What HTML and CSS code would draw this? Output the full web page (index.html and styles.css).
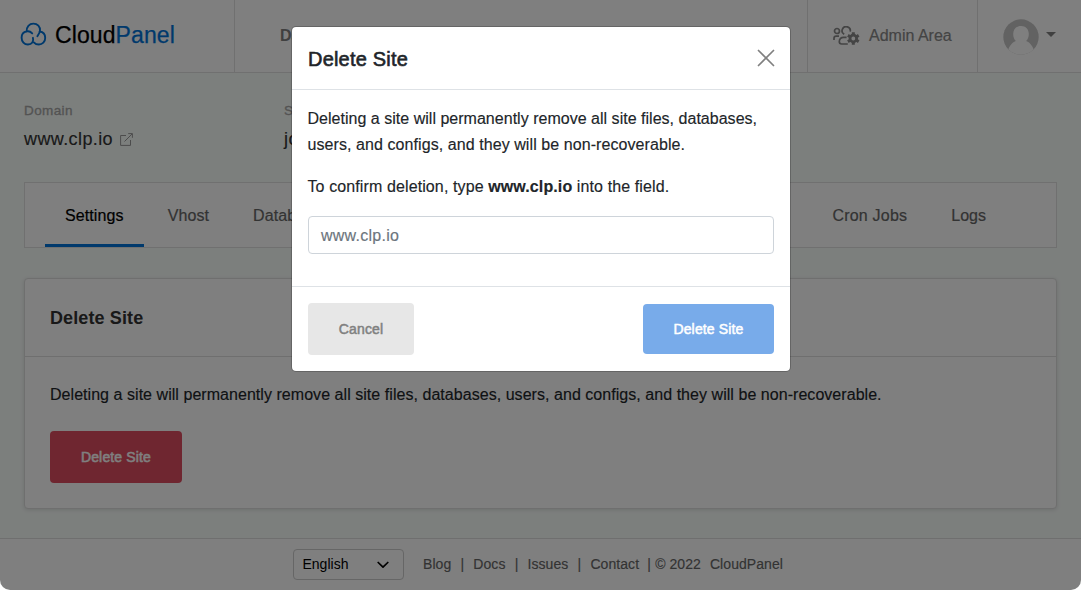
FILE: index.html
```html
<!DOCTYPE html>
<html lang="en">
<head>
<meta charset="utf-8">
<title>Delete Site - CloudPanel</title>
<link rel="stylesheet" href="styles.css">
</head>
<body>
<div class="window">
  <header class="topbar">
    <a class="brand">
      <svg class="brand-icon" viewBox="0 0 27 25" fill="none" stroke="currentColor" stroke-width="1.9" stroke-linecap="round">
        <path d="M6.7 9.4C6.300 4.800 9.300 1.600 13.400 1.600C17.600 1.600 20.300 4.800 20 8.500C19.800 11 18.400 12.600 17.400 14.200"/>
        <path d="M12.200 11.400C10.600 9.600 8.700 8.900 6.700 9.400C3.500 10 1.600 12.500 1.600 15.700C1.600 19.500 4.300 22.500 7.900 22.500C12 22.500 14 19.200 12.900 15.800"/>
        <path d="M19.700 9.500C23 10 25.200 12.600 25.200 15.900C25.200 19.700 22.400 22.500 18.900 22.500C16.800 22.500 15.100 21.700 13.800 20.300"/>
      </svg>
      <span class="brand-name">Cloud<span class="brand-accent">Panel</span></span>
    </a>
    <nav class="main-nav"><span>Dashboard</span></nav>
    <a class="admin-link">
      <svg class="admin-icon" viewBox="0 0 27 20" fill="none" stroke="currentColor" stroke-width="1.7">
        <circle cx="4" cy="5" r="2.500"/>
        <path d="M1 14v-1.500C1 11 2 10.200 3.300 10.200H6"/>
        <path d="M11.200 8.300A4.100 4.100 0 1 1 17.200 5.600"/>
        <path d="M14.800 18H8.600C7 18 6.300 17.200 6.300 15.800C6.300 12.900 8.100 11.300 10.500 11.300H13.600"/>
        <circle cx="20.300" cy="12.500" r="3.300" stroke-width="2.800"/>
        <path d="M20.300 6.300v2.500M20.300 16.200v2.500M14.900 9.400l2.200 1.300M23.500 14.300l2.200 1.300M14.900 15.600l2.200-1.300M23.500 10.700l2.200-1.300" stroke-width="3"/>
      </svg>
      <span>Admin Area</span>
    </a>
    <div class="account">
      <svg class="avatar" viewBox="0 0 36 36">
        <defs><clipPath id="round"><circle cx="18" cy="18" r="17.700"/></clipPath></defs>
        <g clip-path="url(#round)">
          <path class="avatar-back" d="M0 0H36V36H0Z"/>
          <path class="avatar-person" d="M18 7C22.800 7 25.800 10.200 25.800 15C25.800 18 24.800 20.500 23.100 22.100C26 23.300 28.600 25.300 31 31L32 36H4L5 31C7.400 25.300 10 23.300 12.900 22.100C11.200 20.500 10.200 18 10.200 15C10.200 10.200 13.200 7 18 7Z"/>
        </g>
      </svg>
      <span class="caret"></span>
    </div>
  </header>

  <main class="content">
    <section class="site-info">
      <div class="info">
        <div class="info-label">Domain</div>
        <div class="info-value">
          <span>www.clp.io</span>
          <svg class="external" viewBox="0 0 13 13" fill="none" stroke="currentColor"><path d="M6 2.500H.6V12.400H10.500V7M4.500 8.500L12.200.8M8.200.6H12.400V4.800"/></svg>
        </div>
      </div>
      <div class="info">
        <div class="info-label">Site User</div>
        <div class="info-value"><span>john-doe</span></div>
      </div>
    </section>

    <nav class="tabs">
      <a class="tab active"><span>Settings</span></a>
      <a class="tab"><span>Vhost</span></a>
      <a class="tab"><span>Databases</span></a>
      <a class="tab tab-cron"><span>Cron Jobs</span></a>
      <a class="tab tab-logs"><span>Logs</span></a>
    </nav>

    <section class="card">
      <h2 class="card-title">Delete Site</h2>
      <div class="card-body">
        <p class="card-text"><span>Deleting a site will permanently remove all site files, databases, users, and configs, and they will be non-recoverable.</span></p>
        <button class="btn btn-danger">Delete Site</button>
      </div>
    </section>
  </main>

  <footer class="footer">
    <div class="language"><span>English</span>
      <svg class="chevron" viewBox="0 0 12 8" fill="none" stroke="currentColor" stroke-width="1.700" stroke-linecap="round" stroke-linejoin="round"><path d="M1.200 1.500L6 6.200L10.800 1.500"/></svg>
    </div>
    <div class="footer-links">
      <a>Blog</a><i>|</i><a>Docs</a><i>|</i><a>Issues</a><i>|</i><a>Contact</a><i class="last">|</i><span>© 2022</span><a class="owner">CloudPanel</a>
    </div>
  </footer>

  <div class="backdrop">
    <div class="modal">
      <div class="modal-header">
        <h5 class="modal-title">Delete Site</h5>
        <svg class="close" viewBox="0 0 18 18" fill="none" stroke="currentColor" stroke-width="1.700" stroke-linecap="round"><path d="M1.500 1.500L16.500 16.500M16.500 1.500L1.500 16.500"/></svg>
      </div>
      <div class="modal-body">
        <p>Deleting a site will permanently remove all site files, databases,<br><span class="line-wide">users, and configs, and they will be non-recoverable.</span></p>
        <p class="line-confirm">To confirm deletion, type <b>www.clp.io</b> into the field.</p>
        <div class="field">www.clp.io</div>
      </div>
      <div class="modal-footer">
        <button class="btn btn-cancel">Cancel</button>
        <button class="btn btn-primary">Delete Site</button>
      </div>
    </div>
  </div>
</div>
</body>
</html>
```
FILE: styles.css
```css
* { box-sizing: border-box; }
body { margin: 0; background: #fff; font: 16px/26px "Liberation Sans", Arial, sans-serif; color: #212529; }
h2, h5, p { margin: 0; }
.window { position: relative; display: flex; flex-direction: column; height: 590px; overflow: hidden; border-radius: 0 0 10px 10px; background: #f9fefb; }

.topbar { display: flex; height: 73px; background: #fff; border-bottom: 1px solid #e0e0e0; }
.brand { display: flex; align-items: center; width: 235px; padding: 0 0 3px 20px; gap: 8px; border-right: 1px solid #e0e0e0; color: #0073d8; }
.brand-icon { width: 27px; height: 25px; }
.brand-name { color: #000; font-size: 23px; letter-spacing: .1px; -webkit-text-stroke: .25px; }
.brand-accent { color: #0073d8; }
.main-nav { flex: 1; display: flex; align-items: center; padding-left: 45px; color: #808080; font-weight: 700; }
.admin-link { display: flex; align-items: center; width: 171px; padding-left: 25px; gap: 9px; border-left: 1px solid #e0e0e0; border-right: 1px solid #e0e0e0; color: #888; -webkit-text-stroke: .2px; }
.admin-icon { width: 27px; height: 20px; }
.account { display: flex; align-items: center; width: 103px; padding-left: 25px; gap: 7px; }
.avatar { width: 36px; height: 36px; margin-top: 1px; }
.avatar-back { fill: #c4c4c4; }
.avatar-person { fill: #fff; }
.caret { border: 5px solid transparent; border-top-color: #808080; border-bottom: 0; margin-bottom: 4px; }

.content { flex: 1; padding: 25px 24px 0; }
.site-info { display: flex; height: 84px; }
.info { width: 260px; }
.info-label { color: #a6a6a6; font-size: 13.5px; letter-spacing: .4px; -webkit-text-stroke: .3px; }
.info-value { display: flex; align-items: center; gap: 7px; margin-top: 2px; font-size: 18px; letter-spacing: .4px; color: #333; -webkit-text-stroke: .15px; }
.external { width: 13px; height: 13px; color: #999; margin-top: 1px; }

.tabs { display: flex; height: 66px; padding: 0 50px 0 20px; gap: 4px; background: #fff; border: 1px solid #e0e0e0; }
.tab { display: flex; align-items: center; padding: 4px 20px 0; color: #666; letter-spacing: .1px; border-bottom: 3px solid transparent; -webkit-text-stroke: .2px; }
.active { color: #000; border-color: #0073d8; }
.tab-cron { margin-left: auto; letter-spacing: .22px; }
.tab-logs { letter-spacing: 0; }

.card { height: 231px; margin-top: 30px; background: #fff; border: 1px solid #dedede; border-radius: 4px; box-shadow: 0 1px 4px rgba(0,0,0,.12); }
.card-title { height: 78px; padding-left: 25px; border-bottom: 1px solid #dedede; font-size: 18px; letter-spacing: .12px; line-height: 78px; color: #333; }
.card-body { padding: 25px; }
.card-text { margin-bottom: 23px; letter-spacing: .045px; -webkit-text-stroke: .15px; }
.btn { display: block; height: 52px; padding: 0 0 1px; border: 0; border-radius: 4px; font: 14px "Liberation Sans", Arial, sans-serif; letter-spacing: .15px; -webkit-text-stroke: .5px; }
.btn-danger { width: 132px; color: #fff; background: #de4d60; }

.footer { display: flex; align-items: center; height: 52px; padding-left: 293px; background: #fff; border-top: 1px solid #dedede; font-size: 14px; }
.language { display: flex; align-items: center; justify-content: space-between; width: 111px; height: 31px; padding: 0 14px 2px 9px; border: 1px solid #ccc; border-radius: 4px; color: #000; }
.language span { margin-left: -.5px; }
.chevron { width: 12px; height: 8px; margin-top: 2px; }
.footer-links { display: flex; margin-left: 19px; padding-bottom: 2px; color: #666; letter-spacing: .07px; -webkit-text-stroke: .15px; }
.footer-links i { width: 22px; text-align: center; font-style: normal; }
.footer-links .last { width: 16px; padding-left: 4px; }
.owner { margin-left: 9px; }

.backdrop { position: absolute; inset: 0; display: flex; justify-content: center; align-items: flex-start; padding: 26px 0 0 1px; background: rgba(0,0,0,.5); }
.modal { width: 500px; height: 346px; background: #fff; background-clip: padding-box; border: 1px solid rgba(0,0,0,.2); border-radius: 5px; }
.modal-header { display: flex; align-items: center; justify-content: space-between; height: 63px; padding: 0 15px 0 16px; border-bottom: 1px solid #dee2e6; }
.modal-title { font-size: 20px; font-weight: 400; letter-spacing: .2px; -webkit-text-stroke: .6px; padding-top: 1px; }
.close { width: 18px; height: 18px; color: #808080; }
.modal-body { height: 196px; padding: 16px; -webkit-text-stroke: .15px; }
.modal-body p { margin: 0 0 16px -.5px; white-space: nowrap; letter-spacing: .02px; }
.modal-body .line-wide { letter-spacing: .075px; }
.modal-body .line-confirm { letter-spacing: .11px; }
.field { height: 38px; padding: 0 12px; border: 1px solid #ced4da; border-radius: 4px; line-height: 37px; letter-spacing: .25px; color: #6c757d; }
.modal-footer { display: flex; align-items: center; justify-content: space-between; height: 85px; padding: 0 16px; border-top: 1px solid #dee2e6; }
.btn-cancel { width: 106px; color: #808080; background: #e7e7e7; }
.btn-primary { width: 131px; height: 50px; color: #fff; background: #78abea; }
```
